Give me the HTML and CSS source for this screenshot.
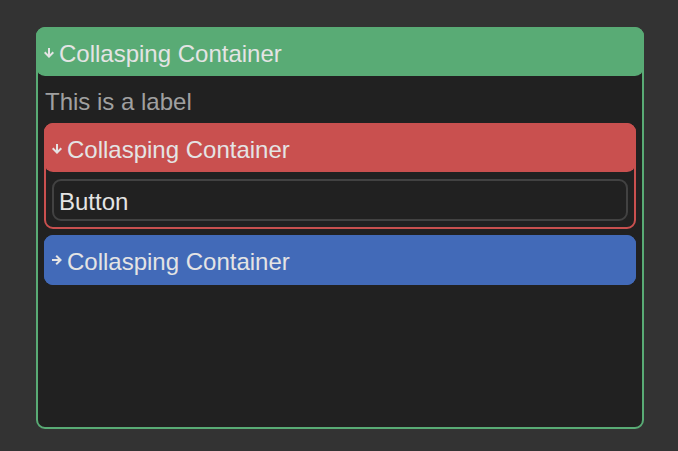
FILE: index.html
```html
<!DOCTYPE html>
<html lang="en">
<head>
<meta charset="utf-8">
<meta name="viewport" content="width=device-width, initial-scale=1">
<title>Collasping Container</title>
<link rel="stylesheet" href="styles.css">
</head>
<body>
<details class="container green" open>
  <summary class="header">
    <svg class="arrow" viewBox="0 0 10 10" aria-hidden="true"><path d="M5 0V9M0.7 4.2L5 8.6L9.3 4.2"/></svg>
    <span>Collasping Container</span>
  </summary>
  <div class="content">
    <p class="label">This is a label</p>
    <details class="container red" open>
      <summary class="header">
        <svg class="arrow" viewBox="0 0 10 10" aria-hidden="true"><path d="M5 0V9M0.7 4.2L5 8.6L9.3 4.2"/></svg>
        <span>Collasping Container</span>
      </summary>
      <div class="content">
        <button class="button" type="button">Button</button>
      </div>
    </details>
    <details class="container blue">
      <summary class="header">
        <svg class="arrow" viewBox="0 0 10 10" aria-hidden="true"><path d="M5 0V9M0.7 4.2L5 8.6L9.3 4.2"/></svg>
        <span>Collasping Container</span>
      </summary>
    </details>
  </div>
</details>
</body>
</html>
```
FILE: styles.css
```css
* {
  box-sizing: border-box;
}

body {
  margin: 0;
  min-height: 100vh;
  padding: 27px 34px 22px 36px;
  display: grid;
  background: #333333;
  color: #e4e4e4;
  font: 24px/28px "Liberation Sans", Arial, sans-serif;
}

.container {
  border: 2px solid var(--accent);
  border-radius: 9px;
  background: #212121;
}

.green {
  --accent: #59ab75;
}

.red {
  --accent: #c9504f;
}

.blue {
  --accent: #426ab8;
}

/* The header covers the container's own border. */
.header {
  display: flex;
  align-items: center;
  gap: 5px;
  height: 49px;
  margin: -2px;
  padding: 4px 8px 0;
  border-radius: 9px;
  background: var(--accent);
  list-style: none;
  cursor: pointer;
}

.header::-webkit-details-marker {
  display: none;
}

.arrow {
  width: 10px;
  height: 10px;
  margin-bottom: 2px;
  fill: none;
  stroke: currentColor;
  stroke-width: 2;
}

.container:not([open]) > .header {
  height: 50px;
}

.container:not([open]) > .header > .arrow {
  margin-bottom: 4px;
  transform: rotate(-90deg);
}

.content {
  display: grid;
  gap: 6px;
  padding: 9px 6px 6px;
}

.label {
  margin: 5px 0 1px;
  padding-left: 1px;
  color: #a0a0a0;
}

.button {
  width: 100%;
  height: 42px;
  padding: 3px 5px 0;
  border: 2px solid #424242;
  border-radius: 9px;
  background: #212121;
  color: #e4e4e4;
  font: inherit;
  text-align: left;
}
```
